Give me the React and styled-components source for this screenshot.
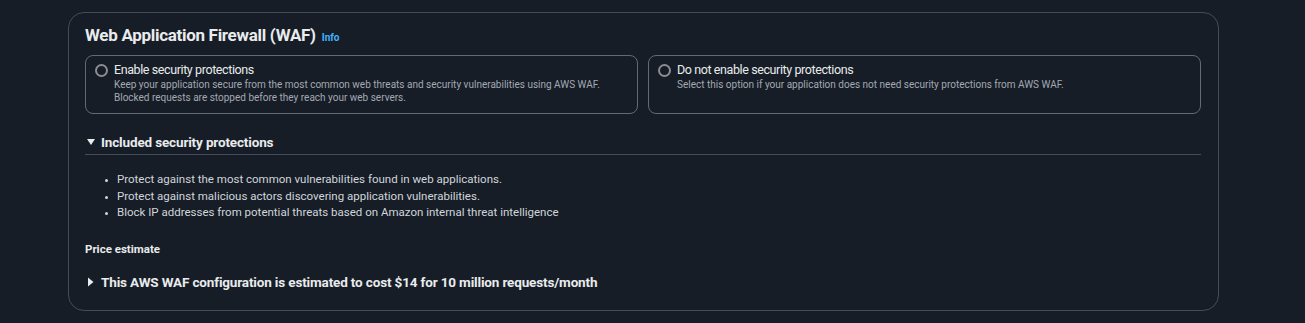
import React from "react";
import styled, { createGlobalStyle } from "styled-components";

const Global = createGlobalStyle`
  html, body { margin: 0; padding: 0; background: #161d26; }
  body { font-family: Roboto, "Noto Sans", sans-serif; color: #e9ebed; }
  * { box-sizing: border-box; }
`;

const Page = styled.div`
  padding: 12px 86px 13px 68px;
  width: 1305px;
`;

const Card = styled.section`
  border: 1px solid #414d5c;
  border-radius: 16px;
  padding: 10px 17px 18px 16px;
  display: flex;
  flex-direction: column;
`;

const Header = styled.div`
  display: flex;
  align-items: baseline;
  gap: 6px;
  height: 24px;
  line-height: 24px;
`;

const Title = styled.h2`
  margin: 0;
  font-size: 17px;
  font-weight: 700;
  letter-spacing: -0.3px;
  color: #e9ebed;
`;

const InfoLink = styled.a`
  font-size: 10px;
  font-weight: 700;
  color: #42b4ff;
  text-decoration: none;
`;

const Tiles = styled.div`
  display: grid;
  grid-template-columns: 1fr 1fr;
  gap: 10px;
  margin-top: 8px;
`;

const Tile = styled.label`
  border: 1px solid #5f6b7a;
  border-radius: 8px;
  height: 59px;
  padding: 6px 9px;
  display: flex;
  gap: 6px;
  align-items: flex-start;
`;

const Radio = styled.span`
  width: 13px;
  height: 13px;
  border-radius: 50%;
  border: 2px solid #8c8c94;
  margin-top: 2px;
  flex: none;
`;

const TileText = styled.div`
  display: flex;
  flex-direction: column;
`;

const TileLabel = styled.span`
  font-size: 12.5px;
  letter-spacing: -0.4px;
  line-height: 16px;
  color: #e9ebed;
`;

const TileDesc = styled.span`
  font-size: 10px;
  line-height: 13px;
  color: #a4a9b3;
`;

const ExpandHeader = styled.div`
  display: flex;
  align-items: center;
  gap: 5px;
  font-size: 13.5px;
  letter-spacing: -0.15px;
  line-height: 20px;
  font-weight: 700;
  color: #e9ebed;
  padding-left: 1px;
  padding-bottom: ${(p) => (p.$divider ? "2px" : "0")};
  border-bottom: ${(p) => (p.$divider ? "1px solid #414d5c" : "none")};
  margin-top: ${(p) => p.$top}px;
`;

const Caret = styled.svg`
  width: 10px;
  height: 10px;
  fill: #e9ebed;
  flex: none;
`;

const List = styled.ul`
  margin: 16px 0 0 0;
  padding-left: 32px;
  font-size: 11.5px;
  line-height: 16.5px;
  color: #d1d5db;
  li::marker { font-size: 9px; }
`;

const SubHeading = styled.div`
  margin-top: 20px;
  font-size: 11.5px;
  line-height: 16px;
  font-weight: 700;
  color: #e9ebed;
`;

function Triangle({ dir }) {
  return (
    <Caret viewBox="0 0 10 10">
      {dir === "down" ? <polygon points="1,2 9,2 5,8" /> : <polygon points="2,0.5 7.5,5 2,9.5" />}
    </Caret>
  );
}

export default function App() {
  return (
    <>
      <Global />
      <Page>
        <Card>
          <Header>
            <Title>Web Application Firewall (WAF)</Title>
            <InfoLink href="#">Info</InfoLink>
          </Header>
          <Tiles>
            <Tile>
              <Radio />
              <TileText>
                <TileLabel>Enable security protections</TileLabel>
                <TileDesc>
                  Keep your application secure from the most common web threats and security vulnerabilities using AWS WAF.
                  <br />
                  Blocked requests are stopped before they reach your web servers.
                </TileDesc>
              </TileText>
            </Tile>
            <Tile>
              <Radio />
              <TileText>
                <TileLabel>Do not enable security protections</TileLabel>
                <TileDesc>Select this option if your application does not need security protections from AWS WAF.</TileDesc>
              </TileText>
            </Tile>
          </Tiles>
          <ExpandHeader $divider $top={18}>
            <Triangle dir="down" />
            Included security protections
          </ExpandHeader>
          <List>
            <li>Protect against the most common vulnerabilities found in web applications.</li>
            <li>Protect against malicious actors discovering application vulnerabilities.</li>
            <li>Block IP addresses from potential threats based on Amazon internal threat intelligence</li>
          </List>
          <SubHeading>Price estimate</SubHeading>
          <ExpandHeader $top={15}>
            <Triangle dir="right" />
            This AWS WAF configuration is estimated to cost $14 for 10 million requests/month
          </ExpandHeader>
        </Card>
      </Page>
    </>
  );
}
